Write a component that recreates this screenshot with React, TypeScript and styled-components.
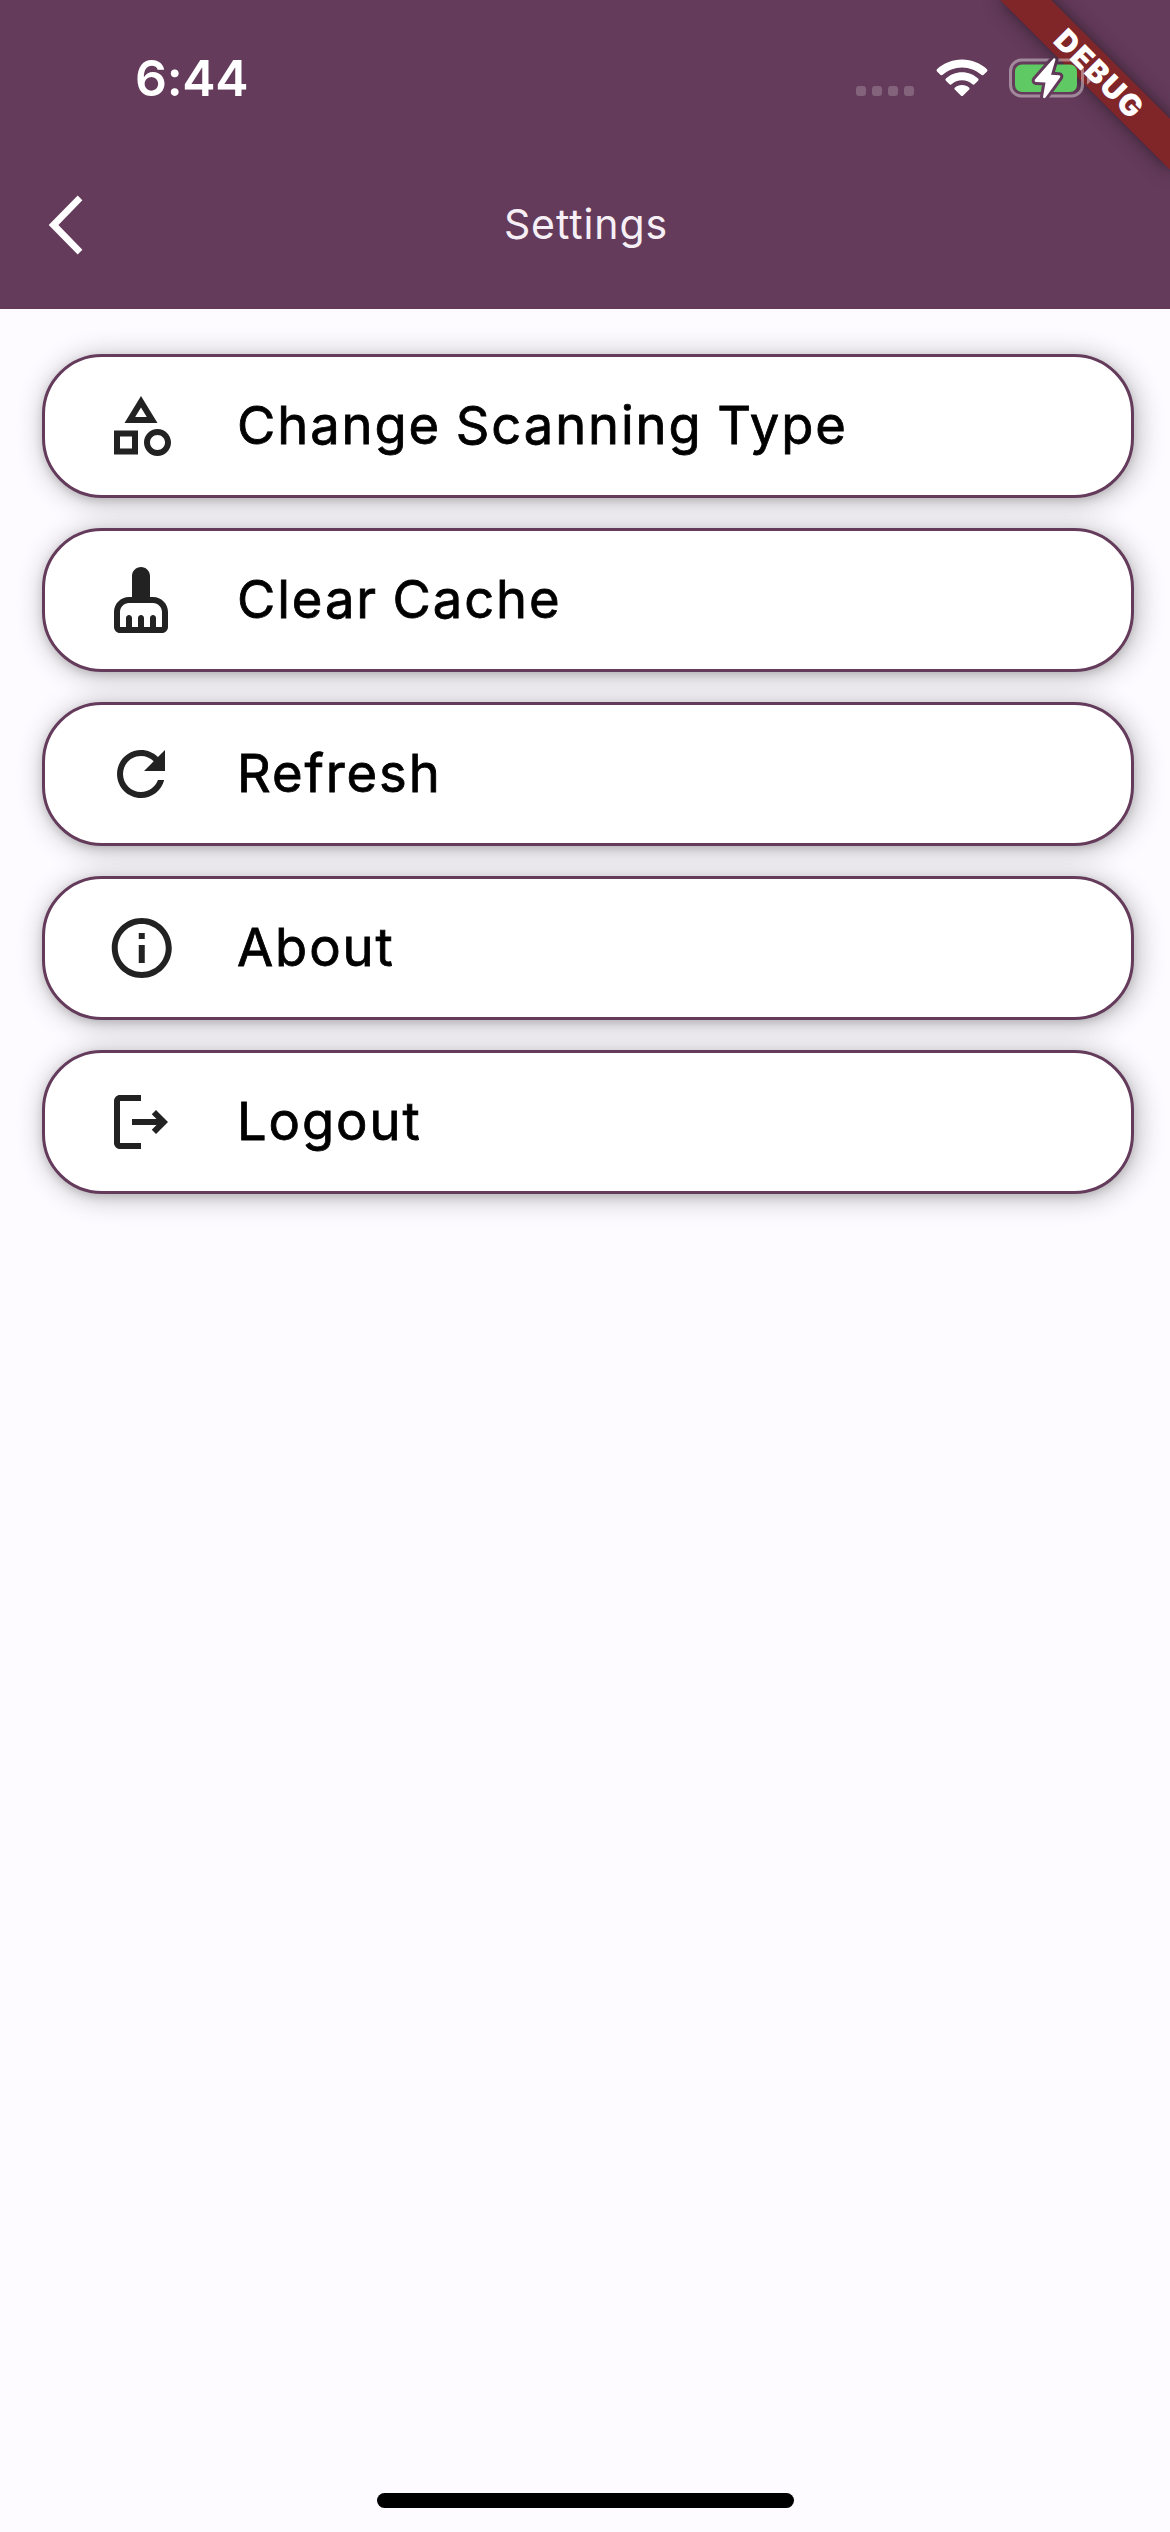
import React from "react";
import styled, { createGlobalStyle } from "styled-components";

const PLUM = "#643b5b";

const GlobalStyle = createGlobalStyle`
  * { box-sizing: border-box; }
  body { margin: 0; background: #fdfbff; }
`;

const Screen = styled.div`
  position: relative;
  display: flex;
  flex-direction: column;
  width: 1170px;
  height: 2532px;
  overflow: hidden;
  background: #fdfbff;
  font-family: Inter, "Liberation Sans", sans-serif;
`;

const Header = styled.header`
  height: 309px;
  flex: none;
  background: ${PLUM};
`;

const StatusBar = styled.div`
  display: flex;
  align-items: center;
  justify-content: space-between;
  height: 141px;
  padding: 14px 76px 0 135px;
`;

const Clock = styled.time`
  color: #fff;
  font-size: 50px;
  font-weight: 600;
  line-height: 60px;
  letter-spacing: -0.3px;
`;

const Indicators = styled.div`
  display: flex;
  align-items: center;
  position: relative;
  z-index: 2;
`;

const SignalDots = styled.div`
  display: flex;
  gap: 6px;
  padding-top: 27px;
  margin-right: 22px;
`;

const Dot = styled.span`
  width: 10px;
  height: 10px;
  border-radius: 3px;
  background: rgba(255, 255, 255, 0.2);
`;

const Wifi = styled.svg`
  display: block;
  width: 52px;
  height: 40px;
  margin-right: 21px;
`;

const Battery = styled.svg`
  display: block;
  width: 85px;
  height: 46px;
`;

const NavBar = styled.div`
  display: grid;
  grid-template-columns: 120px 1fr 120px;
  align-items: center;
  height: 168px;
`;

const BackButton = styled.button`
  display: flex;
  align-items: center;
  height: 120px;
  padding: 0 0 0 48px;
  border: 0;
  background: none;
`;

const Title = styled.h1`
  margin: 0;
  padding: 0 0 2px 2px;
  color: #f6f0f6;
  text-align: center;
  font-size: 41px;
  font-weight: 400;
  line-height: 50px;
  letter-spacing: 0.9px;
`;

const Ribbon = styled.div`
  position: absolute;
  z-index: 1;
  top: 84px;
  left: 1050px;
  width: 240px;
  height: 36px;
  padding-left: 5px;
  transform: rotate(45deg);
  transform-origin: 120px -84px;
  background: #802629;
  box-shadow: 0 0 18px rgba(0, 0, 0, 0.5);
  color: #fff;
  text-align: center;
  font-size: 30px;
  font-weight: 900;
  line-height: 36px;
  letter-spacing: 1.6px;
`;

const List = styled.main`
  display: flex;
  flex-direction: column;
  gap: 30px;
  flex: 1;
  padding: 45px 36px 0 42px;
`;

const Row = styled.button`
  display: flex;
  align-items: center;
  width: 100%;
  height: 144px;
  padding: 0 60px;
  border: 3px solid ${PLUM};
  border-radius: 60px;
  background: #fff;
  box-shadow:
    3px 3px 27px 2px rgba(0, 0, 0, 0.24),
    0 3px 9px rgba(0, 0, 0, 0.14);
  color: #000;
  font-family: inherit;
  text-align: left;
`;

const RowIcon = styled.svg`
  flex: none;
  width: 72px;
  height: 72px;
  fill: #222;
`;

const Label = styled.span`
  margin-left: 60px;
  padding-bottom: 3px;
  font-size: 52.5px;
  font-weight: 400;
  line-height: 64px;
  letter-spacing: 1.9px;
  word-spacing: -2px;
  -webkit-text-stroke: 0.8px #000;
  white-space: nowrap;
`;

const Footer = styled.footer`
  display: flex;
  justify-content: center;
  height: 39px;
`;

const HomeBar = styled.div`
  width: 417px;
  height: 15px;
  border-radius: 8px;
  background: #000;
`;

const items = [
  {
    label: "Change Scanning Type",
    path: "M12 2l-5.5 9h11L12 2zm0 3.84L13.93 9h-3.87L12 5.84zM17.5 13c-2.49 0-4.5 2.01-4.5 4.5s2.01 4.5 4.5 4.5 4.5-2.01 4.5-4.5-2.01-4.5-4.5-4.5zm0 7c-1.38 0-2.5-1.12-2.5-2.5s1.12-2.5 2.5-2.5 2.5 1.12 2.5 2.5-1.12 2.5-2.5 2.5zM3 21.5h8v-8H3v8zm2-6h4v4H5v-4z",
  },
  {
    label: "Clear Cache",
    path: "M16 11h-1V4c0-1.66-1.34-3-3-3S9 2.34 9 4v7H8c-2.76 0-5 2.24-5 5v5c0 1.1.9 2 2 2h14c1.1 0 2-.9 2-2v-5c0-2.76-2.24-5-5-5zm3 10h-2v-3c0-.55-.45-1-1-1s-1 .45-1 1v3h-2v-3c0-.55-.45-1-1-1s-1 .45-1 1v3H9v-3c0-.55-.45-1-1-1s-1 .45-1 1v3H5v-5c0-1.65 1.35-3 3-3h8c1.65 0 3 1.35 3 3v5z",
  },
  {
    label: "Refresh",
    path: "M17.65 6.35C16.2 4.9 14.21 4 12 4c-4.42 0-7.99 3.58-7.99 8s3.57 8 7.99 8c3.73 0 6.84-2.55 7.73-6h-2.08c-.82 2.33-3.04 4-5.65 4-3.31 0-6-2.69-6-6s2.69-6 6-6c1.66 0 3.14.69 4.22 1.78L13 11h7V4l-2.35 2.35z",
  },
  {
    label: "About",
    path: "M11.25 7h2v2h-2V7zm0 4h2v6h-2v-6zm1-9C6.73 2 2.25 6.48 2.25 12s4.48 10 10 10 10-4.48 10-10S17.77 2 12.25 2zm0 18c-4.41 0-8-3.59-8-8s3.59-8 8-8 8 3.59 8 8-3.59 8-8 8z",
  },
  {
    label: "Logout",
    path: "M17 8l-1.41 1.41L17.17 11H9v2h8.17l-1.58 1.58L17 16l4-4-4-4zM5 5h7V3H5c-1.1 0-2 .9-2 2v14c0 1.1.9 2 2 2h7v-2H5V5z",
  },
];

const BOLT =
  "M53.5 7.5 L35 28.5 Q34 30.5 36 31 L45.5 31.5 L43 46 Q43.5 48 45.5 46.5 L60 26.5 Q61 24.5 59 24.2 L51 23.8 L55.5 8.5 Q55 6.5 53.5 7.5Z";

export default function App() {
  return (
    <Screen>
      <GlobalStyle />
      <Header>
        <StatusBar>
          <Clock>6:44</Clock>
          <Indicators>
            <SignalDots>
              <Dot />
              <Dot />
              <Dot />
              <Dot />
            </SignalDots>
            <Wifi viewBox="0 0 52 40" fill="#fff">
              <path d="M26 1.5C35.8 1.5 44.6 5.3 51 11.2Q52 12.3 51 13.4L47.4 16.9Q46.4 17.7 45.3 16.8C40.2 12.2 33.4 9.4 26 9.4S11.8 12.2 6.7 16.8Q5.6 17.7 4.6 16.9L1 13.4Q0 12.3 1 11.2C7.4 5.3 16.2 1.5 26 1.5Z" />
              <path d="M26 14.3C32.3 14.3 38 16.7 42.1 20.6Q43.2 21.7 42.1 22.8L38.5 26.3Q37.5 27.2 36.4 26.3C33.6 23.8 30 22.3 26 22.3S18.4 23.8 15.6 26.3Q14.5 27.2 13.5 26.3L9.9 22.8Q8.8 21.7 9.9 20.6C14 16.7 19.7 14.3 26 14.3Z" />
              <path d="M26 27C28.9 27 31.3 28 33.2 29.7Q34 30.7 33.2 31.6L27.2 37.5Q26 38.6 24.8 37.5L18.8 31.6Q18 30.7 18.8 29.7C20.7 28 23.1 27 26 27Z" />
            </Wifi>
            <Battery viewBox="9 4 85 46">
              <defs>
                <mask id="boltGap" maskUnits="userSpaceOnUse" x="0" y="0" width="100" height="60">
                  <rect width="100" height="60" fill="#fff" />
                  <path d={BOLT} fill="#000" stroke="#000" strokeWidth="6" strokeLinejoin="round" />
                </mask>
              </defs>
              <g mask="url(#boltGap)">
                <rect x="10.5" y="9" width="72" height="36" rx="11" fill="none" stroke="#fff" strokeOpacity="0.4" strokeWidth="3" />
                <rect x="15" y="13.5" width="62" height="27.5" rx="7" fill="#5fc963" />
              </g>
              <path d="M87 20.5Q91 22.5 91 27T87 33.5Z" fill="#fff" fillOpacity="0.45" />
              <path d={BOLT} fill="#fff" />
            </Battery>
          </Indicators>
        </StatusBar>
        <NavBar>
          <BackButton aria-label="Back">
            <svg width="36" height="60" viewBox="0 0 36 60">
              <path d="M.7 30 29.7.4 34.4 5.2 10.4 30 34.4 54.8 29.7 59.6Z" fill="#fff" />
            </svg>
          </BackButton>
          <Title>Settings</Title>
        </NavBar>
      </Header>
      <List>
        {items.map((item) => (
          <Row key={item.label}>
            <RowIcon viewBox="0 0 24 24">
              <path d={item.path} />
            </RowIcon>
            <Label>{item.label}</Label>
          </Row>
        ))}
      </List>
      <Footer>
        <HomeBar />
      </Footer>
      <Ribbon>DEBUG</Ribbon>
    </Screen>
  );
}
